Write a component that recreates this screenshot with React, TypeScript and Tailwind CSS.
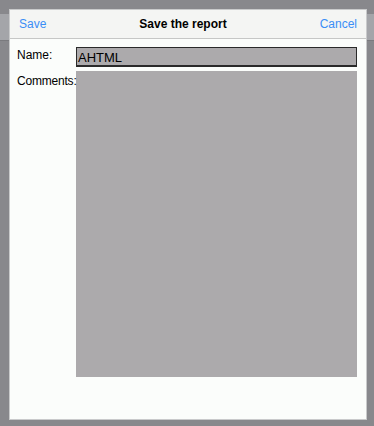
export default function App() {
  return (
    <div className="relative h-[426px] w-[374px] overflow-hidden bg-[#88888c] font-['Liberation_Sans',Arial,sans-serif]">
      {/* page behind the sheet */}
      <div className="mt-[14px] h-[27px] border-b border-[#7a7a7e] bg-[#a4a5a9]" />

      {/* sheet */}
      <div className="absolute left-[9px] top-[9px] flex h-[411px] w-[358px] flex-col border border-[#c9cacb] bg-[#fbfdfb]">
        <div className="flex h-[29px] items-center justify-between border-b border-[#c6c7c6] bg-[#f4f5f3] px-[9px] text-[12px]">
          <span className="text-[#3a8ef6]">Save</span>
          <span className="font-bold text-black">Save the report</span>
          <span className="text-[#3a8ef6]">Cancel</span>
        </div>

        <div className="flex flex-col gap-[4px] pl-[7px] pr-[9px] pt-[8px] text-[12px] text-black">
          <div className="flex items-start">
            <span className="-mt-[1px] w-[59px] whitespace-nowrap">Name:</span>
            <div className="flex h-[20px] flex-1 items-center border border-b-2 border-[#2a2a2a] bg-[#acaaac] px-[1px] pt-[2px] text-[13px]">
              AHTML
            </div>
          </div>
          <div className="flex items-start">
            <span className="relative z-10 w-[59px] whitespace-nowrap pt-[1px] tracking-[-0.2px]">Comments:</span>
            <div className="h-[306px] flex-1 bg-[#acaaac]" />
          </div>
        </div>
      </div>
    </div>
  );
}
